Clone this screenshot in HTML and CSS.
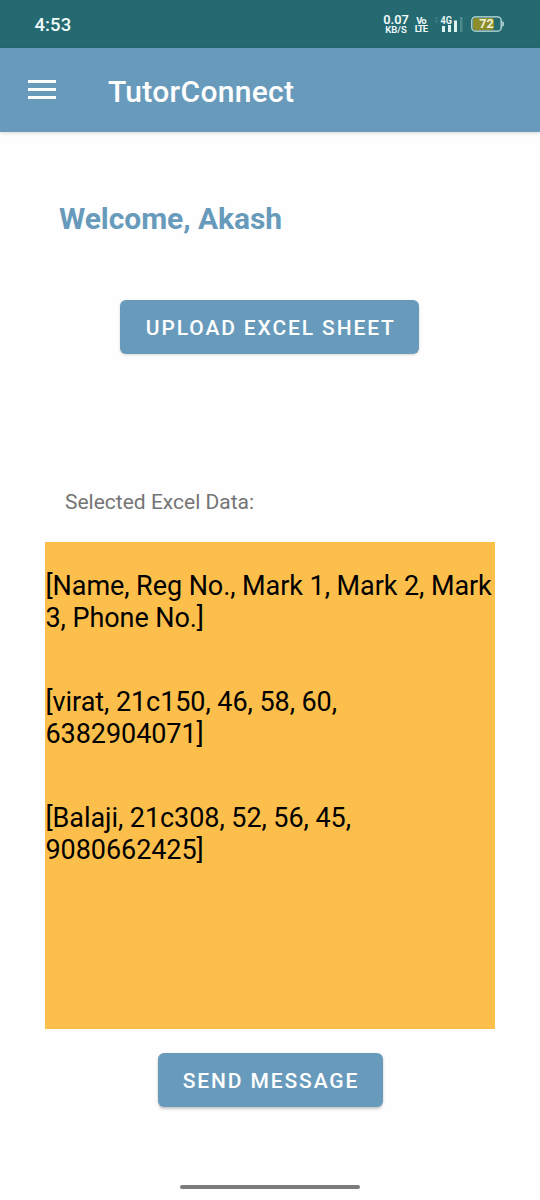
FILE: index.html
```html
<!DOCTYPE html>
<html lang="en">
<head>
<meta charset="utf-8">
<title>TutorConnect</title>
<link rel="stylesheet" href="styles.css">
</head>
<body>
<div class="screen">
  <div class="status-bar">
    <span class="clock">4:53</span>
    <div class="status-icons">
      <div class="speed"><span class="speed-value">0.07</span><span class="speed-unit">KB/S</span></div>
      <div class="volte"><span>Vo</span><span>LTE</span></div>
      <svg class="signal" width="30" height="20" viewBox="0 0 30 20">
        <path d="M0 5l1.500-2 1.500 2zM0 6.500l1.500 2 1.500-2z" fill="#4f8b8c"/>
        <text class="signal-label" x="5.500" y="9.500" textLength="11.500" lengthAdjust="spacingAndGlyphs">4G</text>
        <path d="M7 12h3v6H7zM13 11h3v7h-3zM19 6.500h3v11.500h-3z" fill="#dff3f2"/>
        <path d="M25 3h2.500v15H25z" fill="#4f8b8c"/>
      </svg>
      <svg class="battery" width="34" height="16" viewBox="0 0 34 16">
        <rect x="2" y="2" width="21" height="12" rx="2.500" fill="#8d8d2c"/>
        <rect x=".8" y=".8" width="29.400" height="14.400" rx="3.800" fill="none" stroke="#c3dfdc" stroke-width="1.300"/>
        <path d="M31.300 5c2.200.7 2.200 5.300 0 6z" fill="#c3dfdc"/>
        <text class="battery-label" x="15.500" y="12.300" text-anchor="middle">72</text>
      </svg>
    </div>
  </div>
  <header class="app-bar">
    <svg class="menu" width="28" height="20" viewBox="0 0 28 20"><path d="M0 0h28v3H0zM0 8h28v3H0zM0 16h28v3H0z" fill="#fff"/></svg>
    <h1 class="title">TutorConnect</h1>
  </header>
  <main class="content">
    <h2 class="welcome">Welcome, Akash</h2>
    <button class="button upload">UPLOAD EXCEL SHEET</button>
    <p class="caption">Selected Excel Data:</p>
    <section class="data">
      <p class="row">[Name, Reg No., Mark 1, Mark 2, Mark<br>3, Phone No.]</p>
      <p class="row">[virat, 21c150, 46, 58, 60,<br>6382904071]</p>
      <p class="row">[Balaji, 21c308, 52, 56, 45,<br>9080662425]</p>
    </section>
    <button class="button send">SEND MESSAGE</button>
  </main>
  <div class="home-indicator"></div>
</div>
</body>
</html>
```
FILE: styles.css
```css
* { box-sizing: border-box; }
body { margin: 0; background: #fff; font-family: Roboto, "Liberation Sans", sans-serif; }
h1, h2, p { margin: 0; }
.screen { width: 540px; height: 1200px; display: flex; flex-direction: column; overflow: hidden; background: #fefefe; }
.status-bar { height: 48px; flex: none; padding: 0 35px; display: flex; align-items: center; justify-content: space-between; background: #256a71; color: #f0fbfa; }
.clock { margin-left: -.5px; padding-top: 1px; font: 500 18.500px/22px Roboto, sans-serif; letter-spacing: .1px; }
.status-icons { display: flex; align-items: center; }
.speed, .volte { display: flex; flex-direction: column; align-items: center; }
.speed { width: 26px; margin-right: 1px; }
.speed-value { font-size: 12.800px; line-height: 10px; font-weight: 600; }
.speed-unit { font-size: 9.500px; line-height: 9px; font-weight: 600; }
.volte { width: 12px; margin-left: 5px; padding-top: 1px; font-size: 9.500px; line-height: 8px; letter-spacing: -.9px; font-weight: 700; }
.signal { margin-left: 8px; }
.signal-label { font: 600 10.500px Roboto, sans-serif; fill: #f0fbfa; }
.battery { margin-left: 6px; }
.battery-label { font: 700 12.500px Roboto, sans-serif; fill: #eef3d8; }
.app-bar { height: 84px; flex: none; position: relative; display: flex; align-items: center; padding: 0 28px; gap: 52px; background: #689bbb; color: #fff; box-shadow: 0 1px 4px rgba(0, 0, 0, .16); }
.title { font-size: 30px; line-height: 36px; font-weight: 500; letter-spacing: .3px; padding-top: 3px; }
.content { flex: 1; display: flex; flex-direction: column; align-items: center; }
.welcome { align-self: flex-start; margin: 69px 0 0 59px; font-size: 30px; line-height: 36px; font-weight: 700; letter-spacing: -.07px; color: #689bbb; }
.button { flex: none; height: 54px; border: 0; border-radius: 6px; padding: 2px 0 0 2px; background: #689bbb; color: #fff; font: 500 21px/25px Roboto, sans-serif; letter-spacing: 1.870px; box-shadow: 0 2px 3px rgba(0, 0, 0, .22); }
.upload { width: 299px; margin: 63px 0 0 0; margin-right: .4px; box-shadow: 0 1px 3px rgba(0, 0, 0, .16); }
.caption { align-self: flex-start; margin: 136px 0 0 65px; font-size: 21px; line-height: 25px; color: #757575; }
.data { width: 450px; height: 487px; flex: none; margin-top: 27px; padding: 29px 0 0 .5px; display: flex; flex-direction: column; gap: 52.700px; background: #fdbf4b; color: #000; }
.row { font-size: 27px; line-height: 31.640px; letter-spacing: -.07px; white-space: nowrap; }
.send { width: 225px; margin-top: 24px; }
.home-indicator { align-self: center; flex: none; width: 180px; height: 4px; margin-bottom: 11px; border-radius: 2px; background: #7c7c7c; }
```
